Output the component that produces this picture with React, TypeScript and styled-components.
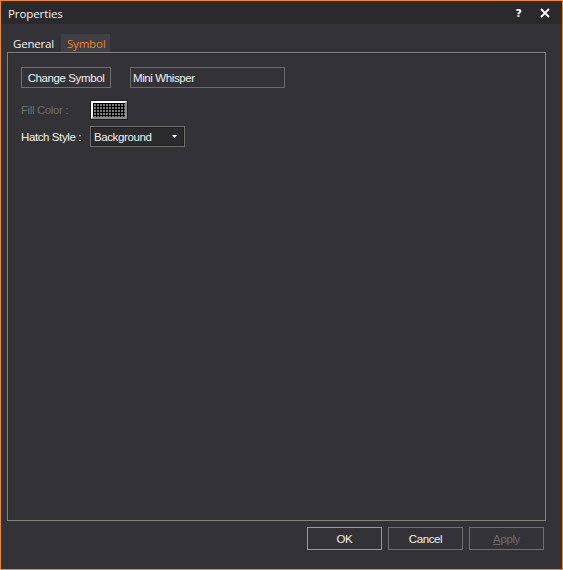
import React from 'react';
import styled, { createGlobalStyle } from 'styled-components';

const GlobalStyle = createGlobalStyle`
  html, body {
    margin: 0;
    padding: 0;
    background: #333337;
  }
  * {
    box-sizing: border-box;
  }
`;

export default function App() {
  return (
    <>
      <GlobalStyle />
      <Window>
        <TitleBar>
          <Title>Properties</Title>
          <TitleButtons>
            <HelpGlyph>?</HelpGlyph>
            <CloseButton>
              <svg width="10" height="10" viewBox="0 0 10 10">
                <path d="M1 1 L9 9 M9 1 L1 9" stroke="#ffffff" strokeWidth="1.8" />
              </svg>
            </CloseButton>
          </TitleButtons>
        </TitleBar>

        <Body>
          <TabStrip>
            <Tab>General</Tab>
            <Tab active>Symbol</Tab>
          </TabStrip>

          <Panel>
            <Row>
              <Button>Change Symbol</Button>
              <TextBox>Mini Whisper</TextBox>
            </Row>

            <FieldRow>
              <Label disabled>Fill Color :</Label>
              <Swatch />
            </FieldRow>

            <FieldRow tight>
              <Label>Hatch Style :</Label>
              <Select>
                <span>Background</span>
                <svg width="5" height="3" viewBox="0 0 5 3">
                  <path d="M0 0 H5 L2.5 3 Z" fill="#ffffff" />
                </svg>
              </Select>
            </FieldRow>
          </Panel>

          <Footer>
            <DialogButton primary>OK</DialogButton>
            <DialogButton>Cancel</DialogButton>
            <DialogButton disabled>
              <u>A</u>pply
            </DialogButton>
          </Footer>
        </Body>
      </Window>
    </>
  );
}

const Window = styled.div`
  width: 563px;
  height: 570px;
  border: 1px solid #f5881f;
  background: #333337;
  display: flex;
  flex-direction: column;
  font-family: 'Liberation Sans', Arial, sans-serif;
`;

const TitleBar = styled.div`
  height: 23px;
  background: #2a2a2c;
  display: flex;
  align-items: center;
  justify-content: space-between;
  padding: 1px 12px 0 7px;
`;

const Title = styled.div`
  font-family: 'Open Sans', 'Noto Sans', sans-serif;
  font-size: 11.5px;
  color: #f1f1f1;
  letter-spacing: -0.1px;
`;

const TitleButtons = styled.div`
  display: flex;
  align-items: center;
  gap: 18px;
`;

const HelpGlyph = styled.span`
  font-family: 'DejaVu Sans', sans-serif;
  font-weight: bold;
  font-size: 11px;
  color: #ffffff;
`;

const CloseButton = styled.span`
  display: flex;
  align-items: center;
`;

const Body = styled.div`
  flex: 1;
  display: flex;
  flex-direction: column;
  padding: 0 0 0 6px;
`;

const TabStrip = styled.div`
  height: 28px;
  display: flex;
  align-items: flex-end;
  padding-left: 2px;
`;

const Tab = styled.div<{ active?: boolean }>`
  height: 18px;
  padding: 0 6px 0 ${(p) => (p.active ? '6px' : '4px')};
  display: flex;
  align-items: center;
  font-family: 'Open Sans', 'Noto Sans', sans-serif;
  font-size: 11.5px;
  letter-spacing: -0.2px;
  color: ${(p) => (p.active ? '#f0851c' : '#f1f1f1')};
  background: ${(p) => (p.active ? '#3f3f46' : 'transparent')};
  width: ${(p) => (p.active ? '49px' : '52px')};
`;

const Panel = styled.div`
  width: 539px;
  height: 469px;
  border: 1px solid #828282;
  box-shadow: inset 1px 1px 0 #2d2d30;
  padding: 14px 13px;
  display: flex;
  flex-direction: column;
`;

const Row = styled.div`
  display: flex;
  align-items: center;
  gap: 19px;
`;

const FieldRow = styled.div<{ tight?: boolean }>`
  display: flex;
  align-items: center;
  margin-top: ${(p) => (p.tight ? '7px' : '13px')};
`;

const Button = styled.div`
  width: 90px;
  height: 21px;
  border: 1px solid #6f6f6f;
  display: flex;
  align-items: center;
  justify-content: center;
  color: #f1f1f1;
  font-size: 11.5px;
  letter-spacing: -0.4px;
`;

const TextBox = styled.div`
  width: 155px;
  height: 21px;
  border: 1px solid #6a6a6a;
  padding-left: 2px;
  display: flex;
  align-items: center;
  color: #f1f1f1;
  font-size: 11.5px;
  letter-spacing: -0.4px;
`;

const Label = styled.span<{ disabled?: boolean }>`
  width: 69px;
  font-size: 11.5px;
  letter-spacing: -0.4px;
  color: ${(p) => (p.disabled ? '#6d6d6d' : '#f1f1f1')};
`;

const Swatch = styled.div`
  width: 36px;
  height: 18px;
  margin-left: 1px;
  border: 2px solid #ffffff;
  border-right-color: #8a8a8a;
  border-bottom-color: #8a8a8a;
  outline: 1px solid #1e1e1e;
  background-color: #7e7e7e;
  background-image: linear-gradient(#000000 1px, transparent 1px),
    linear-gradient(90deg, #000000 1px, transparent 1px);
  background-size: 3px 3px;
`;

const Select = styled.div`
  width: 95px;
  height: 21px;
  border: 1px solid #707070;
  box-shadow: inset 0 0 0 1px #202022;
  background: #2b2b2d;
  display: flex;
  align-items: center;
  justify-content: space-between;
  padding: 0 7px 0 3px;
  color: #f1f1f1;
  font-size: 11.5px;
  letter-spacing: -0.4px;
`;

const Footer = styled.div`
  display: flex;
  justify-content: flex-end;
  gap: 6px;
  padding: 6px 18px 0 0;
`;

const DialogButton = styled.div<{ primary?: boolean; disabled?: boolean }>`
  width: 75px;
  height: 23px;
  display: flex;
  align-items: center;
  justify-content: center;
  border: 1px solid ${(p) => (p.primary ? '#f0851c' : '#6f6f6f')};
  color: ${(p) => (p.disabled ? '#6d6d6d' : '#f1f1f1')};
  font-size: 11.5px;
  letter-spacing: -0.4px;
`;
